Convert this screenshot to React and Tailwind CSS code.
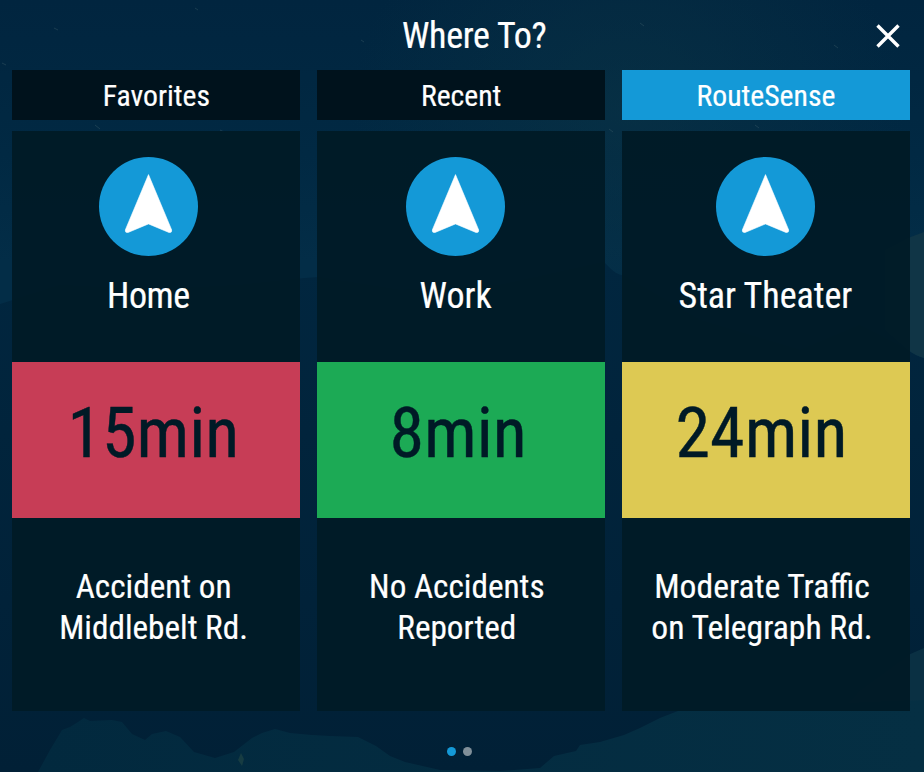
const tabs = [
  { label: "Favorites", style: "bg-[#00121c]" },
  { label: "Recent", style: "bg-[#00121c]" },
  { label: "RouteSense", style: "bg-[#1499d7]" },
];

const routes = [
  {
    name: "Home",
    time: "15min",
    lines: ["Accident on", "Middlebelt Rd."],
    band: "bg-[#c73d56]",
    head: "mr-[16px]",
    title: "tracking-[-0.4px]",
    timePos: "mr-[6px]",
    note: "mr-[5px] scale-x-[0.977]",
  },
  {
    name: "Work",
    time: "8min",
    lines: ["No Accidents", "Reported"],
    band: "bg-[#1caa55]",
    head: "mr-[11px]",
    title: "",
    timePos: "mr-[6px]",
    note: "mr-[8px] scale-x-[0.977]",
  },
  {
    name: "Star Theater",
    time: "24min",
    lines: ["Moderate Traffic", "on Telegraph Rd."],
    band: "bg-[#ddc953]",
    head: "mr-[1px]",
    title: "",
    timePos: "mr-[9px]",
    note: "mr-[7px] scale-x-[0.988]",
  },
];

function Scenery() {
  return (
    <svg className="absolute inset-0 h-full w-full" viewBox="0 0 924 772" preserveAspectRatio="none" aria-hidden="true">
      <defs>
        <linearGradient id="sky" x1="0" y1="0" x2="0" y2="1">
          <stop offset="0" stopColor="#01253f" />
          <stop offset="0.2" stopColor="#012943" />
          <stop offset="0.34" stopColor="#032d47" />
        </linearGradient>
        <linearGradient id="range" x1="0" y1="0" x2="0" y2="1">
          <stop offset="0" stopColor="#01263f" />
          <stop offset="1" stopColor="#012036" />
        </linearGradient>
        <radialGradient id="glow" cx="0.68" cy="0.14" r="0.3">
          <stop offset="0" stopColor="#0b3546" stopOpacity="0.55" />
          <stop offset="1" stopColor="#0b3546" stopOpacity="0" />
        </radialGradient>
        <linearGradient id="hill" x1="0" y1="0" x2="1" y2="0">
          <stop offset="0" stopColor="#02293e" />
          <stop offset="1" stopColor="#052f43" />
        </linearGradient>
      </defs>
      <rect width="924" height="772" fill="url(#sky)" />
      <rect width="924" height="772" fill="url(#glow)" />
      <path d="M0 304 L60 285 L150 290 L240 285 L304 278 L318 277 L400 290 L500 285 L604 262 C610 268 616 275 623 275 L700 320 L800 350 L860 325 L908 350 Q916 356 924 358 V772 H0Z" fill="url(#range)" />
      <path d="M885 250 L908 238 L924 232 V358 Q916 356 908 350 L885 330Z" fill="#103546" />
      <path d="M780 772 L860 690 L908 655 L924 648 V772Z" fill="#0a3043" />
      <path d="M38 772 L50 750 L62 730 L70 727 L78 722 L84 718 L90 721 L112 720 L122 722 L132 734 L145 740 L152 734 L166 731 L180 737 L194 752 L215 758 L234 752 L252 738 L262 733 L275 729 L290 733 L312 735 L330 736 L358 737 L376 746 L390 756 L405 762 L440 770 L500 771 L540 768 L554 756 L576 751 L580 745 L600 742 L624 735 L640 728 L660 718 L678 711 L924 700 V772Z" fill="url(#hill)" />
      <path d="M241 753 L244 759 L242 766 L238 760Z" fill="#173c42" />
      <g stroke="#41616b" strokeWidth="1" opacity="0.4">
        <path d="M54 28l4 2M2 63l4 2M195 8l3 2M95 125l5 4M220 130l4 2M640 23l4 3M834 45l4 3M755 125l4 3M361 40l3 2M609 129l4 3" />
      </g>
    </svg>
  );
}

function Pointer() {
  return (
    <svg className="block size-[99px]" viewBox="0 0 99 99" aria-hidden="true">
      <circle cx="49.5" cy="49.5" r="49.5" fill="#1499d7" />
      <path
        d="M49.5 17.6 L72.7 73 Q73 75.9 70 75.5 L49.5 66.9 L29 75.5 Q26 75.9 26.3 73Z"
        fill="white"
        stroke="white"
        strokeWidth="0.6"
      />
    </svg>
  );
}

function RouteCard({ route }) {
  return (
    <article className="flex h-[580px] flex-col items-center bg-[#001a26]/95 pt-[26px]">
      <div className={"flex flex-col items-center " + route.head}>
        <Pointer />
        <h2 className={"mt-[16.5px] h-[46.5px] text-[36px] leading-[46px] whitespace-nowrap " + route.title}>{route.name}</h2>
      </div>
      <div className={"mt-[43px] flex h-[156px] w-full shrink-0 justify-center " + route.band}>
        <p className={"h-[142px] text-[70px] leading-[142px] text-[#001a26] [-webkit-text-stroke:0.4px] " + route.timePos}>
          {route.time}
        </p>
      </div>
      <div className={"mt-[48px] text-center text-[34px] leading-[41px] whitespace-nowrap " + route.note}>
        <p>{route.lines[0]}</p>
        <p>{route.lines[1]}</p>
      </div>
    </article>
  );
}

export default function App() {
  return (
    <main className="relative h-[772px] w-[924px] overflow-hidden bg-[#012741] font-['Roboto_Condensed',Roboto,sans-serif] font-normal text-white [-webkit-text-stroke:0.2px] [font-stretch:75%]">
      <Scenery />
      <div className="relative flex h-full flex-col">
        <header className="flex h-[70px] items-center justify-between pr-[23px] pl-[402px]">
          <h1 className="pt-[2px] text-[36px] leading-[70px] tracking-[-0.3px] whitespace-nowrap">Where To?</h1>
          <button aria-label="Close" className="block">
            <svg className="block size-[26px]" viewBox="0 0 26 26" aria-hidden="true">
              <path d="M2.5 3.5L23.5 24.5M23.5 3.5L2.5 24.5" stroke="white" strokeWidth="3.4" fill="none" />
            </svg>
          </button>
        </header>
        <nav className="grid grid-cols-3 gap-x-[16.6px] pr-[14px] pl-[12.3px]">
          {tabs.map((tab) => (
            <button key={tab.label} className={"h-[50px] text-[29.7px] leading-[52px] " + tab.style}>
              {tab.label}
            </button>
          ))}
        </nav>
        <section className="mt-[11px] grid grid-cols-3 gap-x-[16.6px] pr-[14px] pl-[12.3px]">
          {routes.map((route) => (
            <RouteCard key={route.name} route={route} />
          ))}
        </section>
        <footer className="mt-[35.5px] ml-[446.5px] flex gap-[7.6px]">
          <span className="size-[9px] rounded-full bg-[#1499d7]" />
          <span className="size-[9px] rounded-full bg-[#808f99]" />
        </footer>
      </div>
    </main>
  );
}
